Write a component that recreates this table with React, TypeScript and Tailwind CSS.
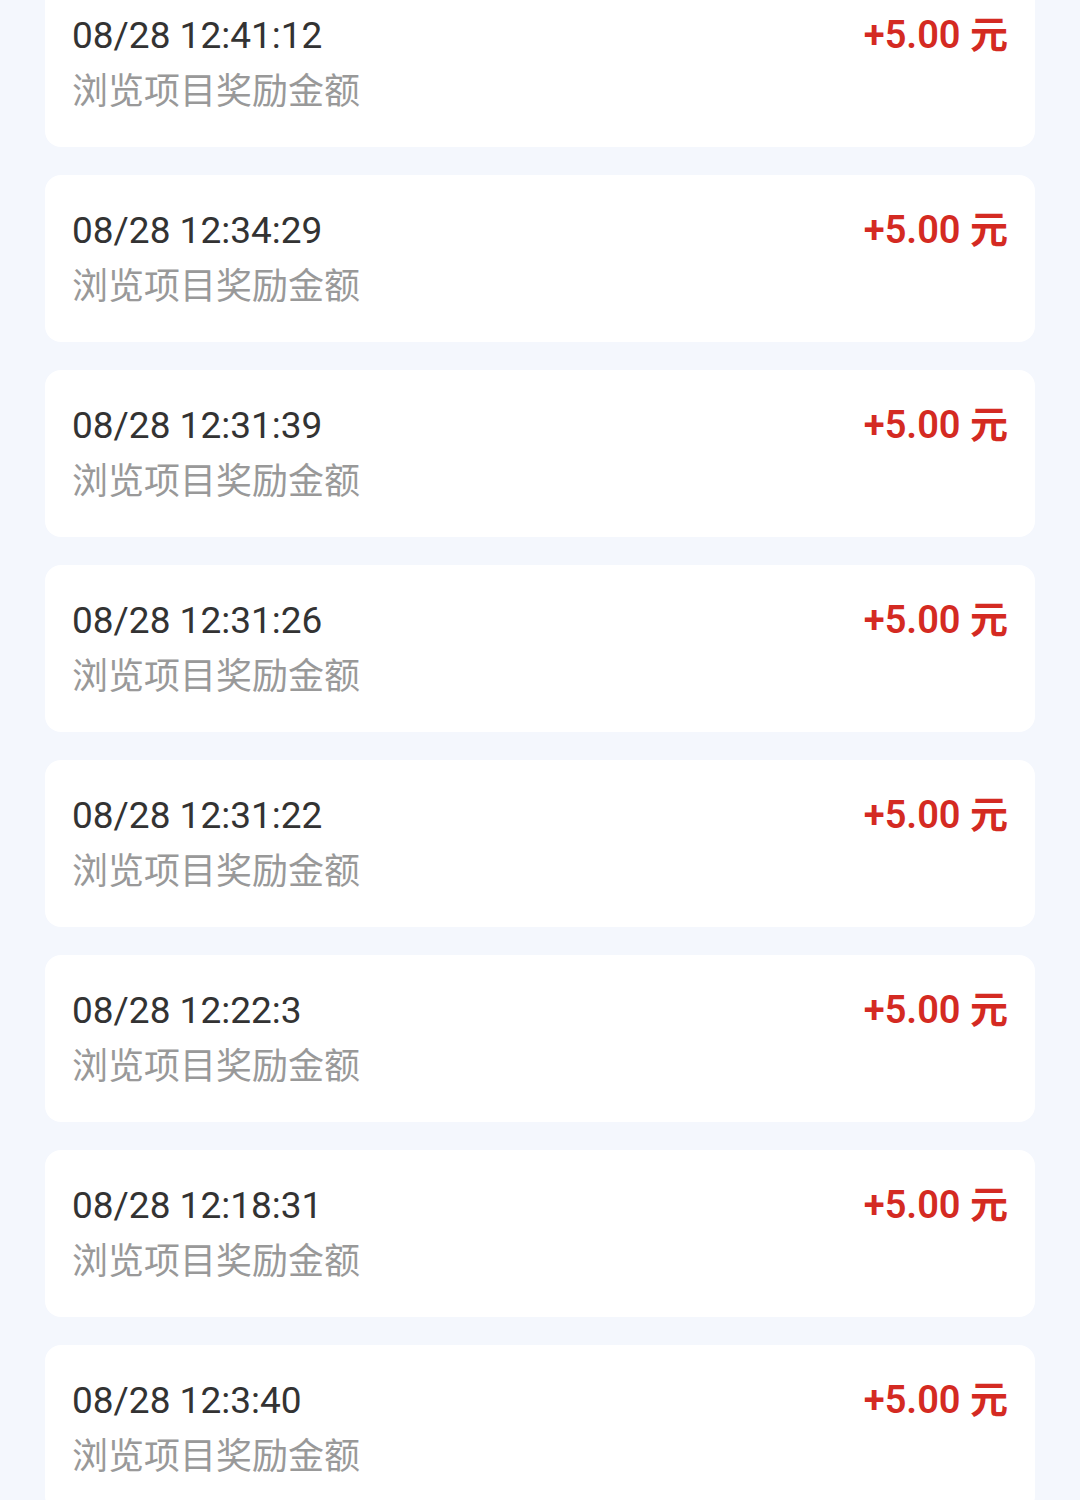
import React from "react";

const rows = [
  "08/28 12:41:12",
  "08/28 12:34:29",
  "08/28 12:31:39",
  "08/28 12:31:26",
  "08/28 12:31:22",
  "08/28 12:22:3",
  "08/28 12:18:31",
  "08/28 12:3:40",
];

export default function App() {
  return (
    <div
      className="w-[1080px] h-[1500px] overflow-hidden bg-[#f4f7fd]"
      style={{ fontFamily: 'Roboto, "Noto Sans CJK SC", sans-serif' }}
    >
      <div className="mt-[-20px] px-[45px] flex flex-col gap-[28px]">
        {rows.map((t) => (
          <div
            key={t}
            className="bg-white rounded-[16px] h-[167px] pt-[31px] pl-[27px] pr-[27px] flex justify-between items-start"
          >
            <div className="flex flex-col">
              <div className="text-[37px] leading-[49px] text-[#333333]">{t}</div>
              <div
                className="text-[36px] leading-[57px] text-[#999999]"
                style={{ fontFamily: '"Noto Sans CJK SC", sans-serif' }}
              >
                浏览项目奖励金额
              </div>
            </div>
            <div className="text-[38px] leading-[49px] font-semibold text-[#d42a22]">
              +5.00 元
            </div>
          </div>
        ))}
      </div>
    </div>
  );
}
